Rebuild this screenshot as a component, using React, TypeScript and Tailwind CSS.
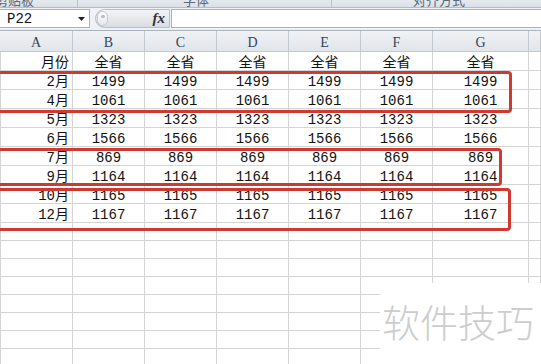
import React from "react";

const months = ["2月", "4月", "5月", "6月", "7月", "9月", "10月", "12月"];
const values = [1499, 1061, 1323, 1566, 869, 1164, 1165, 1167];
const letters = ["A", "B", "C", "D", "E", "F", "G", ""];

const rows: string[][] = [
  ["月份", "全省", "全省", "全省", "全省", "全省", "全省", ""],
  ...months.map((m, i) => [m, ...Array(6).fill(String(values[i])), ""]),
];

const gridCols = "grid grid-cols-[73px_72px_72px_72px_72px_72px_96px_1fr]";

function Ribbon() {
  return (
    <div className="h-[8px] flex overflow-hidden border-b border-[#b3bcc7] bg-gradient-to-b from-[#e4e9ef] to-[#dbe1e8] text-[13px] leading-[13px] text-[#5b6878] font-['Noto_Sans_CJK_SC',sans-serif]">
      <div className="w-[78px] shrink-0 border-r border-[#b9c1cb]">
        <span className="block -mt-[7px] -ml-[5px]">剪贴板</span>
      </div>
      <div className="w-[254px] shrink-0 border-r border-[#b9c1cb] pl-[105px]">
        <span className="block -mt-[7px]">字体</span>
      </div>
      <div className="flex-1 pl-[81px]">
        <span className="block -mt-[7px]">对齐方式</span>
      </div>
    </div>
  );
}

function FormulaBar() {
  return (
    <div className="h-[23px] flex items-start pt-[1px] bg-[#eef1f5] border-b border-[#a9b2bd]">
      <div className="w-[90px] h-[19px] bg-white border border-l-0 border-[#a9b2bd] flex items-center justify-between pl-[7px] pr-[4px] font-['Liberation_Mono',monospace] text-[14px] text-[#111]">
        <span className="leading-[14px]">P22</span>
        <svg width="7" height="4" viewBox="0 0 7 4">
          <path d="M0 0 H7 L3.5 4 Z" fill="#222" />
        </svg>
      </div>
      <div className="ml-[5px] w-[75px] h-[19px] rounded-l-full border border-[#b6bdc5] bg-gradient-to-b from-[#f3f4f6] to-[#d9dde1] flex items-center justify-between pl-[1px] pr-[4px]">
        <div className="w-[11px] h-[15px] rounded-full border border-[#c3c8ce] bg-gradient-to-b from-[#fbfbfc] to-[#e6e8eb] flex justify-center pt-[3px]">
          <div className="w-[4px] h-[3px] rounded-full bg-[#b9bec4]" />
        </div>
        <span className="font-['Liberation_Serif',serif] italic font-bold text-[15px] leading-[15px] text-[#333]">fx</span>
      </div>
      <div className="flex-1 h-[19px] bg-white border border-r-0 border-[#a9b2bd] ml-[1px]" />
    </div>
  );
}

export default function App() {
  return (
    <div className="relative w-[541px] h-[364px] overflow-hidden bg-white">
      <Ribbon />
      <FormulaBar />

      {/* column headers */}
      <div className={`${gridCols} h-[21px]`}>
        {letters.map((l, i) => (
          <div
            key={i}
            className="border-r border-b border-[#c3c9d0] bg-gradient-to-b from-[#f0f2f5] to-[#e1e5ea] flex items-center justify-center pt-[3px] font-['Liberation_Serif',serif] text-[14px] leading-[14px] text-[#34455a]"
          >
            {l}
          </div>
        ))}
      </div>

      {/* data rows */}
      {rows.map((r, ri) => (
        <div key={ri} className={`${gridCols} h-[19px]`}>
          {r.map((c, ci) => (
            <div
              key={ci}
              className={`border-r border-b border-[#d4d4d4] flex items-end font-['Liberation_Mono','Noto_Sans_CJK_SC',monospace] text-[14px] leading-[13px] text-[#111] whitespace-nowrap ${
                ci === 0 ? "justify-end pr-[3px] border-l" : "justify-center"
              }`}
            >
              {c}
            </div>
          ))}
        </div>
      ))}

      {/* empty rows */}
      {Array.from({ length: 8 }).map((_, ri) => (
        <div key={ri} className={`${gridCols} h-[18px]`}>
          {letters.map((_, ci) => (
            <div key={ci} className={`border-r border-b border-[#d4d4d4] ${ci === 0 ? "border-l" : ""}`} />
          ))}
        </div>
      ))}

      {/* red highlight boxes */}
      <div className="absolute left-[-10px] top-[71px] w-[522px] h-[42px] border-[3px] border-[#d0392f] rounded-[4px]" />
      <div className="absolute left-[-10px] top-[148px] w-[512px] h-[38px] border-[3px] border-[#d0392f] rounded-[4px]" />
      <div className="absolute left-[-10px] top-[188px] w-[521px] h-[43px] border-[3px] border-[#d0392f] rounded-[4px]" />

      {/* watermark */}
      <div className="absolute left-[380px] top-[283px] right-0 bottom-0 bg-white pl-[2px] pt-[19px]">
        <span className="font-['Noto_Sans_CJK_SC',sans-serif] font-light text-[38px] leading-[38px] text-[#cdcdcd] whitespace-nowrap">
          软件技巧
        </span>
      </div>
    </div>
  );
}
